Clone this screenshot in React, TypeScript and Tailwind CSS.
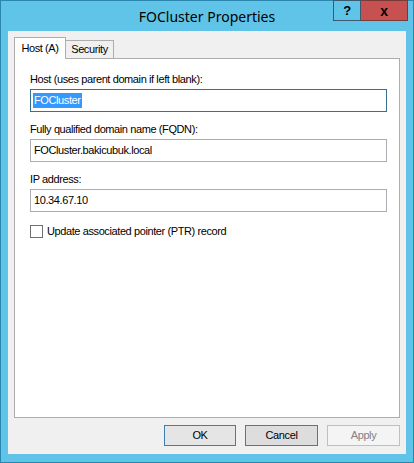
import { useState } from 'react';

const sans = { fontFamily: '"Liberation Sans", Arial, sans-serif' };

const Field = ({ label, value, focused }: { label: string; value: string; focused?: boolean }) => (
  <div className="flex flex-col">
    <label className="h-[14px] leading-[14px]">{label}</label>
    <div
      className={`mt-[3px] flex h-[23px] items-center border px-[2px] bg-white ${
        focused ? 'border-[#3c6e8f]' : 'border-[#abadb3]'
      }`}
    >
      {focused ? (
        <span className="bg-[#3399ff] px-[1px] text-white leading-[15px]">{value}</span>
      ) : (
        <span className="px-[1px]">{value}</span>
      )}
    </div>
  </div>
);

export default function App() {
  const [ptr, setPtr] = useState(false);

  return (
    <div
      className="relative h-[463px] w-[414px] overflow-hidden bg-[#5fc4e8] text-[11px] tracking-[-0.4px] text-black"
      style={sans}
    >
      <div className="flex h-full flex-col border border-[#2a86ad]">
        {/* title bar */}
        <div className="relative flex h-[30px] shrink-0 items-center justify-center">
          <span
            className="text-[14px] tracking-normal text-black"
            style={{ fontFamily: '"Noto Sans", "Open Sans", sans-serif' }}
          >
            FOCluster Properties
          </span>
          <div className="absolute right-[5px] top-[-1px] flex">
            <button className="flex h-[21px] w-[28px] items-center justify-center border border-[#3c5a6e] bg-[#5fc4e8] text-[13px] font-bold leading-none">
              ?
            </button>
            <button className="flex h-[21px] w-[47px] items-center justify-center border border-l-0 border-[#7a3a36] bg-[#c75050] text-[14px] font-bold leading-none text-black">
              x
            </button>
          </div>
        </div>

        {/* client area */}
        <div className="mx-[7px] mb-[8px] flex flex-1 flex-col bg-[#f0f0f0] px-[6px] pt-[6px]">
          {/* tabs */}
          <div className="relative z-10 flex h-[21px] items-end">
            <div className="-mb-px flex h-[22px] w-[52px] items-center justify-center border border-b-0 border-[#adadad] bg-white">
              Host (A)
            </div>
            <div className="flex h-[18px] w-[48px] items-center justify-center border border-b-0 border-l-0 border-[#adadad] bg-[#f0f0f0]">
              Security
            </div>
          </div>

          {/* tab page */}
          <div className="flex h-[360px] flex-col gap-[10px] border border-[#adadad] bg-white pl-[15px] pr-[12px] pt-[13px]">
            <Field label="Host (uses parent domain if left blank):" value="FOCluster" focused />
            <Field label="Fully qualified domain name (FQDN):" value="FOCluster.bakicubuk.local" />
            <Field label="IP address:" value="10.34.67.10" />
            <label className="mt-[1px] flex items-center gap-[4px]">
              <input
                type="checkbox"
                checked={ptr}
                onChange={() => setPtr(!ptr)}
                className="h-[13px] w-[13px] appearance-none border border-[#707070] bg-white"
              />
              Update associated pointer (PTR) record
            </label>
          </div>

          {/* buttons */}
          <div className="mt-[7px] flex justify-end gap-[9px]">
            <button className="h-[21px] w-[72px] border border-[#3c7fb1] bg-[#e5e5e5]">OK</button>
            <button className="h-[21px] w-[73px] border border-[#707070] bg-[#dddddd]">Cancel</button>
            <button className="h-[21px] w-[73px] border border-[#bfbfbf] bg-[#f4f4f4] text-[#838383]">Apply</button>
          </div>
        </div>
      </div>
    </div>
  );
}
